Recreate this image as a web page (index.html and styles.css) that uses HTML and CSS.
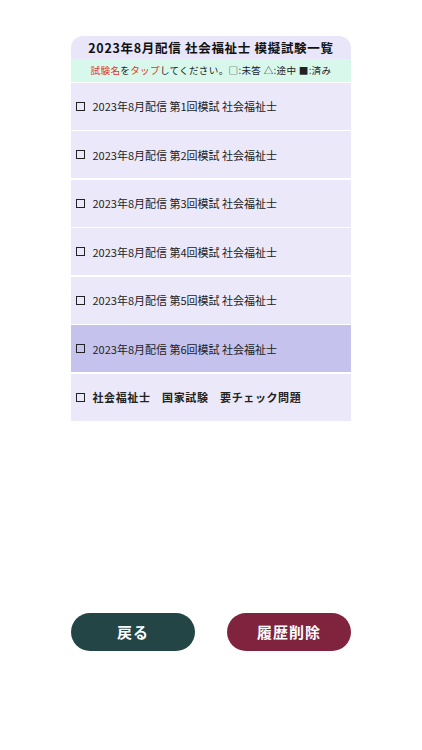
FILE: index.html
```html
<!doctype html>
<html lang="ja">
<head>
	<meta charset="UTF-8">
	<title>模擬試験一覧</title>
	<link rel="stylesheet" href="styles.css">
</head>
<body>
	<div class="page">
		<div class="list">
			<div class="list-title">2023年8月配信 社会福祉士 模擬試験一覧</div>
			<div class="list-tips"><span class="red">試験名</span>を<span class="red">タップ</span>してください。□:未答 △:途中 ■:済み</div>
			<div class="item"><span class="box"></span><span class="item-s">2023年8月配信 第1回模試 社会福祉士</span></div>
			<div class="item"><span class="box"></span><span class="item-s">2023年8月配信 第2回模試 社会福祉士</span></div>
			<div class="item"><span class="box"></span><span class="item-s">2023年8月配信 第3回模試 社会福祉士</span></div>
			<div class="item"><span class="box"></span><span class="item-s">2023年8月配信 第4回模試 社会福祉士</span></div>
			<div class="item"><span class="box"></span><span class="item-s">2023年8月配信 第5回模試 社会福祉士</span></div>
			<div class="item item-on"><span class="box"></span><span class="item-s">2023年8月配信 第6回模試 社会福祉士</span></div>
			<div class="item item-check"><span class="box"></span><span class="item-s">社会福祉士　国家試験　要チェック問題</span></div>
		</div>
		<div class="btns">
			<a href="" class="btn btn-back">戻る</a>
			<a href="" class="btn btn-del">履歴削除</a>
		</div>
	</div>
</body>
</html>
```

FILE: styles.css
```css
body,html{
	width: 100%;
	height: 100%;
}
body{
	margin: 0;
	background: #fff;
}
a{
	text-decoration: none;
}
*{
	font-family: "Noto Sans CJK JP", "Noto Sans", sans-serif;
}
.page{
	width: 280px;
	margin: 0 auto;
	padding-top: 36px;
}
.list{
	display: flex;
	flex-direction: column;
	gap: 1.5px;
}
.list-title{
	height: 22.5px;
	line-height: 23px;
	margin-bottom: -1.5px;
	background: #e8e6f8;
	border-radius: 12px 12px 0 0;
	text-align: center;
	font-size: 12.5px;
	font-weight: bold;
	letter-spacing: 0.7px;
	color: #111;
}
.list-tips{
	height: 23px;
	line-height: 23px;
	background: #d9f8ec;
	text-align: center;
	font-size: 9.6px;
	letter-spacing: 0.3px;
	color: #222;
	margin-bottom: -0.5px;
}
.red{
	color: #e0332e;
}
.item{
	height: 47px;
	background: #ebe9f9;
	display: flex;
	align-items: center;
	font-size: 11px;
	color: #222;
}
.item-on{
	background: #c5c2ee;
}
.item-check .item-s{
	font-weight: bold;
	letter-spacing: 0.6px;
}
.box{
	width: 7px;
	height: 7px;
	border: 1.5px solid #222;
	margin: 0 8px 0 4.5px;
}
.btns{
	display: flex;
	justify-content: space-between;
	margin-top: 192px;
}
.btn{
	width: 124px;
	height: 38px;
	line-height: 38px;
	border-radius: 19px;
	text-align: center;
	color: #fff;
	font-size: 15px;
	font-weight: bold;
	letter-spacing: 1px;
}
.btn-back{
	background: #234545;
}
.btn-del{
	background: #80233f;
}
```
